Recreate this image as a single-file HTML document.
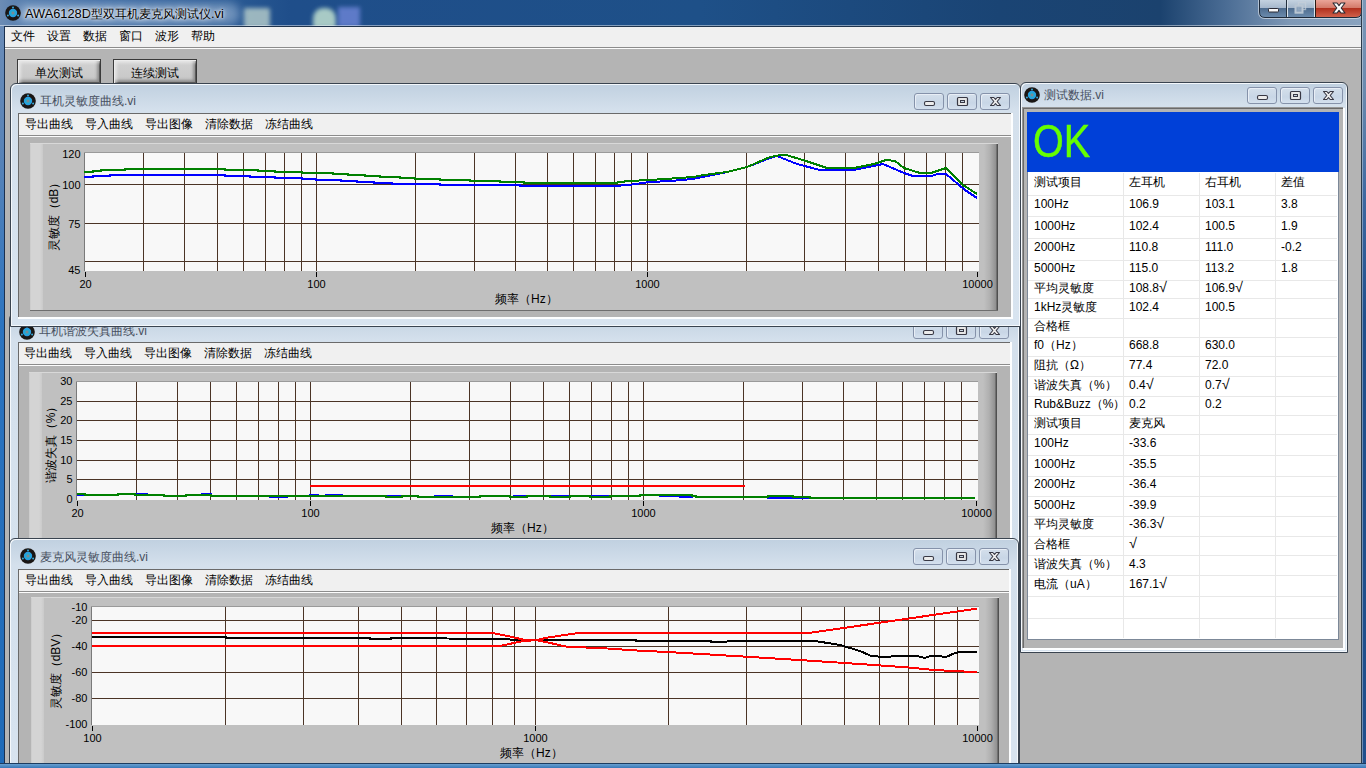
<!DOCTYPE html><html><head><meta charset="utf-8"><style>html,body{margin:0;padding:0;width:1366px;height:768px;overflow:hidden;font-family:"Liberation Sans", sans-serif;}</style></head><body style="background:#b4b4b4;position:relative">
<div style="position:absolute;left:0px;top:0px;width:1366px;height:26px;background:linear-gradient(90deg,#6c8cb4 0px,#4e78aa 30px,#3a68a0 120px,#2a5a94 230px,#1f4e8a 290px,#1e5088 700px,#1a4474 1000px,#1b426e 1160px,#4a6c94 1225px,#7e98b6 1290px,#8aa4c0 1366px)"></div>
<div style="position:absolute;left:244px;top:8px;width:26px;height:20px;background:#b0c8c8;filter:blur(2px);opacity:.85;border-radius:2px"></div>
<div style="position:absolute;left:313px;top:8px;width:23px;height:20px;background:#c0e0d0;filter:blur(2px);opacity:.85;border-radius:10px 10px 2px 2px"></div>
<div style="position:absolute;left:338px;top:7px;width:22px;height:20px;background:#6e86d8;filter:blur(2px);opacity:.8"></div>
<div style="position:absolute;left:0px;top:25px;width:1361px;height:1px;background:rgba(255,255,255,.45)"></div>
<div style="position:absolute;left:18px;top:3px;width:222px;height:22px;background:rgba(220,235,250,.38);filter:blur(5px);border-radius:10px"></div>
<svg style="position:absolute;left:4px;top:4px" width="18" height="18" viewBox="0 0 18 18"><circle cx="9" cy="9" r="7.8" fill="#1a1614"/><circle cx="9" cy="9" r="3.5" fill="#1ab0d8" stroke="#2a9ce0" stroke-width="1.4"/><rect x="7.6" y="7.6" width="2.8" height="2.8" fill="#7a8a96"/><circle cx="9" cy="3.4" r="1" fill="#3aa8d8"/><circle cx="3.9" cy="11.4" r="1" fill="#3aa8d8"/><circle cx="14.1" cy="11.4" r="1" fill="#3aa8d8"/></svg>
<div style="position:absolute;left:25px;top:8px;font-size:12px;line-height:1;color:#000;white-space:nowrap;text-shadow:0 0 7px rgba(255,255,255,.9),0 0 4px rgba(255,255,255,.9),0 0 2px rgba(255,255,255,.7)"><span style="font-size:12.8px">AWA6128D</span>型双耳机麦克风测试仪<span style="font-size:12.8px">.vi</span></div>
<svg style="position:absolute;left:1258px;top:0" width="105" height="19" viewBox="0 0 105 19"><defs><linearGradient id="gb" x1="0" y1="0" x2="0" y2="1"><stop offset="0" stop-color="#c4d2e0"/><stop offset="0.45" stop-color="#a6b8cc"/><stop offset="0.47" stop-color="#4e6c8e"/><stop offset="1" stop-color="#6c8cae"/></linearGradient><linearGradient id="gr" x1="0" y1="0" x2="0" y2="1"><stop offset="0" stop-color="#eaa498"/><stop offset="0.45" stop-color="#d47a6a"/><stop offset="0.47" stop-color="#b02e1c"/><stop offset="1" stop-color="#d0604a"/></linearGradient></defs><path d="M1.5 0 V12 Q1.5 17.5 7 17.5 H98 Q103.5 17.5 103.5 12 V0 Z" fill="url(#gb)"/><path d="M57.5 0 V17 H98 Q103 17 103 12 V0 Z" fill="url(#gr)"/><path d="M1.5 0 V12 Q1.5 17.5 7 17.5 H98 Q103.5 17.5 103.5 12 V0" fill="none" stroke="#1e2a3a" stroke-width="1"/><path d="M0.5 0 V12 Q0.5 18.5 7 18.5 H98 Q104.5 18.5 104.5 12 V0" fill="none" stroke="rgba(255,255,255,.5)" stroke-width="1"/><rect x="29" y="0" width="1" height="17" fill="#d8e2ec"/><rect x="28" y="0" width="1" height="17" fill="#22303e"/><rect x="56" y="0" width="1" height="17" fill="#d8e2ec"/><rect x="57" y="0" width="1" height="17" fill="#2a1a14"/><rect x="10.5" y="8.5" width="10" height="3.5" rx="0.8" fill="#f8f8f8" stroke="#2a2a34" stroke-width="1"/><rect x="40.5" y="2.5" width="7" height="7" fill="none" stroke="#c4ced8" stroke-width="1.4" opacity=".75"/><rect x="36.8" y="5" width="8.4" height="8.4" fill="#8ea4bc" opacity=".9"/><rect x="37.5" y="5.7" width="7" height="7" fill="none" stroke="#c4ced8" stroke-width="2" opacity=".8"/><path d="M75 3 L79 3 L81 5.6 L83 3 L87 3 L83.2 8 L87 13 L83 13 L81 10.4 L79 13 L75 13 L78.8 8 Z" fill="#fbfbfb" stroke="#2c2c34" stroke-width="1.1" stroke-linejoin="round"/></svg>
<div style="position:absolute;left:5px;top:26px;width:1356px;height:22px;background:#f0f0f0;border-top:1px solid #20344c;border-bottom:1px solid #8c8c8c;box-sizing:border-box"></div>
<div style="position:absolute;left:5px;top:48px;width:1356px;height:1px;background:#fcfcfc"></div>
<div style="position:absolute;left:11px;top:30px;font-size:12px;line-height:1;color:#000;white-space:nowrap;">文件</div>
<div style="position:absolute;left:47px;top:30px;font-size:12px;line-height:1;color:#000;white-space:nowrap;">设置</div>
<div style="position:absolute;left:83px;top:30px;font-size:12px;line-height:1;color:#000;white-space:nowrap;">数据</div>
<div style="position:absolute;left:119px;top:30px;font-size:12px;line-height:1;color:#000;white-space:nowrap;">窗口</div>
<div style="position:absolute;left:155px;top:30px;font-size:12px;line-height:1;color:#000;white-space:nowrap;">波形</div>
<div style="position:absolute;left:191px;top:30px;font-size:12px;line-height:1;color:#000;white-space:nowrap;">帮助</div>
<div style="position:absolute;left:17px;top:59px;width:82px;height:23px;border:1px solid #3a3a3a;background:linear-gradient(#d2d2d2,#c6c6c6);box-shadow:inset 1px 1px 0 #ececec,inset 3px 3px 3px rgba(255,255,255,.45),inset -1px -1px 0 #5a5a5a,inset -3px -3px 3px rgba(0,0,0,.3);font-size:12px;line-height:26px;text-align:center">单次测试</div>
<div style="position:absolute;left:113px;top:59px;width:82px;height:23px;border:1px solid #3a3a3a;background:linear-gradient(#d2d2d2,#c6c6c6);box-shadow:inset 1px 1px 0 #ececec,inset 3px 3px 3px rgba(255,255,255,.45),inset -1px -1px 0 #5a5a5a,inset -3px -3px 3px rgba(0,0,0,.3);font-size:12px;line-height:26px;text-align:center">连续测试</div>
<div style="position:absolute;left:9px;top:313px;width:1009px;height:486px;border:1px solid #3a4450;border-radius:6px 6px 0 0;background:linear-gradient(#c0d0e0 0px,#d4e0ec 26px,#d8e4f0 100%);box-shadow:inset 1px 1px 0 #f4f8fc,inset -1px -1px 0 #f4f8fc"></div>
<div style="position:absolute;left:18px;top:342px;width:994px;height:451px;background:#fdfeff"></div>
<div style="position:absolute;left:18px;top:342px;width:992px;height:449px;background:#b4b4b4;border-top:1px solid #6a6a6a;border-left:1px solid #6a6a6a;box-sizing:border-box"></div>
<svg style="position:absolute;left:18px;top:323px" width="18" height="18" viewBox="0 0 18 18"><circle cx="9" cy="9" r="7.8" fill="#1a1614"/><circle cx="9" cy="9" r="3.5" fill="#1ab0d8" stroke="#2a9ce0" stroke-width="1.4"/><rect x="7.6" y="7.6" width="2.8" height="2.8" fill="#7a8a96"/><circle cx="9" cy="3.4" r="1" fill="#3aa8d8"/><circle cx="3.9" cy="11.4" r="1" fill="#3aa8d8"/><circle cx="14.1" cy="11.4" r="1" fill="#3aa8d8"/></svg>
<div style="position:absolute;left:39px;top:325px;font-size:12px;line-height:1;color:#485060;white-space:nowrap;">耳机谐波失真曲线.vi</div>
<div style="position:absolute;left:913px;top:322px;width:28px;height:15px;border:1px solid #8592aa;border-radius:3px;background:linear-gradient(#d4dfeb,#c8d6e6 60%,#d4e0ee);box-shadow:inset 1px 1px 0 #e8eef6"></div>
<div style="position:absolute;left:946px;top:322px;width:28px;height:15px;border:1px solid #8592aa;border-radius:3px;background:linear-gradient(#d4dfeb,#c8d6e6 60%,#d4e0ee);box-shadow:inset 1px 1px 0 #e8eef6"></div>
<div style="position:absolute;left:979px;top:322px;width:28px;height:15px;border:1px solid #8592aa;border-radius:3px;background:linear-gradient(#d4dfeb,#c8d6e6 60%,#d4e0ee);box-shadow:inset 1px 1px 0 #e8eef6"></div>
<svg style="position:absolute;left:913px;top:322px" width="30" height="17"><rect x="10.5" y="8.5" width="10" height="4" rx="1.5" fill="#ececec" stroke="#383844" stroke-width="1.1"/></svg>
<svg style="position:absolute;left:946px;top:322px" width="30" height="17"><rect x="10.5" y="4.5" width="10" height="8" rx="1" fill="#e6e6e6" stroke="#383844" stroke-width="1.2"/><rect x="13.5" y="7.5" width="4" height="2" fill="#c6d2de" stroke="#383844" stroke-width="1"/></svg>
<svg style="position:absolute;left:979px;top:322px" width="30" height="17"><path d="M10.5 4.5 L13.8 4.5 L15.5 6.4 L17.2 4.5 L20.5 4.5 L17.2 8.5 L20.5 12.5 L17.2 12.5 L15.5 10.6 L13.8 12.5 L10.5 12.5 L13.8 8.5 Z" fill="#eeeeee" stroke="#383844" stroke-width="1.1" stroke-linejoin="round"/></svg>
<div style="position:absolute;left:19px;top:343px;width:991px;height:22px;background:#f0f0f0;border-bottom:1px solid #8c8c8c;box-sizing:border-box"></div>
<div style="position:absolute;left:19px;top:365px;width:991px;height:1px;background:#fcfcfc"></div>
<div style="position:absolute;left:24px;top:347px;font-size:12px;line-height:1;color:#000;white-space:nowrap;">导出曲线</div>
<div style="position:absolute;left:84px;top:347px;font-size:12px;line-height:1;color:#000;white-space:nowrap;">导入曲线</div>
<div style="position:absolute;left:144px;top:347px;font-size:12px;line-height:1;color:#000;white-space:nowrap;">导出图像</div>
<div style="position:absolute;left:204px;top:347px;font-size:12px;line-height:1;color:#000;white-space:nowrap;">清除数据</div>
<div style="position:absolute;left:264px;top:347px;font-size:12px;line-height:1;color:#000;white-space:nowrap;">冻结曲线</div>
<div style="position:absolute;left:29px;top:372px;width:968px;height:174px;background:linear-gradient(90deg,#c6c6c6 0px,#d4d4d4 1px,#d4d4d4 10px,#cacaca 13px,#c0c0c0 13px,#c0c0c0 calc(100% - 14px),#b0b0b0 calc(100% - 8px),#909090 calc(100% - 2px),#505050 calc(100% - 1px));box-shadow:inset 0 1px 0 #d8d8d8,inset 0 -1px 0 #6e6e6e"></div>
<svg style="position:absolute;left:76px;top:381px;overflow:visible" width="902" height="119" viewBox="0 0 902 119" shape-rendering="crispEdges"><rect x="0" y="0" width="902" height="119" fill="#f8f8f8"/><rect x="60" y="1" width="1" height="118" fill="#4b3426"/><rect x="101" y="1" width="1" height="118" fill="#4b3426"/><rect x="134" y="1" width="1" height="118" fill="#4b3426"/><rect x="160" y="1" width="1" height="118" fill="#4b3426"/><rect x="182" y="1" width="1" height="118" fill="#4b3426"/><rect x="202" y="1" width="1" height="118" fill="#4b3426"/><rect x="219" y="1" width="1" height="118" fill="#4b3426"/><rect x="234" y="1" width="1" height="118" fill="#4b3426"/><rect x="334" y="1" width="1" height="118" fill="#4b3426"/><rect x="393" y="1" width="1" height="118" fill="#4b3426"/><rect x="434" y="1" width="1" height="118" fill="#4b3426"/><rect x="467" y="1" width="1" height="118" fill="#4b3426"/><rect x="493" y="1" width="1" height="118" fill="#4b3426"/><rect x="515" y="1" width="1" height="118" fill="#4b3426"/><rect x="535" y="1" width="1" height="118" fill="#4b3426"/><rect x="552" y="1" width="1" height="118" fill="#4b3426"/><rect x="567" y="1" width="1" height="118" fill="#4b3426"/><rect x="667" y="1" width="1" height="118" fill="#4b3426"/><rect x="726" y="1" width="1" height="118" fill="#4b3426"/><rect x="767" y="1" width="1" height="118" fill="#4b3426"/><rect x="800" y="1" width="1" height="118" fill="#4b3426"/><rect x="826" y="1" width="1" height="118" fill="#4b3426"/><rect x="848" y="1" width="1" height="118" fill="#4b3426"/><rect x="868" y="1" width="1" height="118" fill="#4b3426"/><rect x="885" y="1" width="1" height="118" fill="#4b3426"/><rect x="1" y="20" width="901" height="1" fill="#4b3426"/><rect x="1" y="39" width="901" height="1" fill="#4b3426"/><rect x="1" y="59" width="901" height="1" fill="#4b3426"/><rect x="1" y="79" width="901" height="1" fill="#4b3426"/><rect x="1" y="98" width="901" height="1" fill="#4b3426"/><rect x="0" y="0" width="1" height="119" fill="#7a7a7a"/><rect x="0" y="0" width="902" height="1" fill="#9a9a9a"/><polyline points="1.0,114.0 9.0,114.0 9.0,114.0 42.0,114.0 42.0,113.0 59.0,113.0 59.0,113.0 71.0,113.0 71.0,114.0 88.0,114.0 88.0,115.0 110.0,115.0 110.0,114.0 126.0,114.0 126.0,113.0 135.0,113.0 135.0,115.0 194.0,115.0 194.0,116.0 211.0,116.0 211.0,115.0 234.0,115.0 234.0,114.0 242.0,114.0 242.0,115.0 250.0,115.0 250.0,114.0 266.0,114.0 266.0,115.0 310.0,115.0 310.0,115.0 326.0,115.0 326.0,115.0 342.0,115.0 342.0,116.0 359.0,116.0 359.0,115.0 376.0,115.0 376.0,116.0 404.0,116.0 404.0,115.0 434.0,115.0 434.0,116.0 438.0,116.0 438.0,115.0 451.0,115.0 451.0,115.0 474.0,115.0 474.0,115.0 494.0,115.0 494.0,115.0 514.0,115.0 514.0,115.0 534.0,115.0 534.0,115.0 564.0,115.0 564.0,114.0 584.0,114.0 584.0,115.0 604.0,115.0 604.0,116.0 616.0,116.0 616.0,115.0 620.0,115.0 620.0,116.0 692.0,116.0 692.0,117.0 717.0,117.0 717.0,117.0 734.0,117.0 734.0,117.0 899.0,117.0" fill="none" stroke="#0000ff" stroke-width="2" stroke-linejoin="round"/><polyline points="1.0,113.0 9.0,113.0 9.0,114.0 42.0,114.0 42.0,113.0 59.0,113.0 59.0,114.0 88.0,114.0 88.0,115.0 110.0,115.0 110.0,114.0 135.0,114.0 135.0,115.0 310.0,115.0 310.0,116.0 326.0,116.0 326.0,115.0 342.0,115.0 342.0,116.0 404.0,116.0 404.0,115.0 434.0,115.0 434.0,116.0 451.0,116.0 451.0,115.0 474.0,115.0 474.0,116.0 494.0,116.0 494.0,115.0 514.0,115.0 514.0,116.0 534.0,116.0 534.0,115.0 564.0,115.0 564.0,114.0 616.0,114.0 616.0,115.0 620.0,115.0 620.0,116.0 692.0,116.0 692.0,115.0 717.0,115.0 717.0,116.0 734.0,116.0 734.0,117.0 899.0,117.0" fill="none" stroke="#008000" stroke-width="2" stroke-linejoin="round"/><polyline points="234.0,105.0 669.0,105.0" fill="none" stroke="#ff0000" stroke-width="2" stroke-linejoin="round"/></svg>
<div style="position:absolute;left:12.5px;top:374.15px;width:60px;text-align:right;font-size:11px;line-height:14px;color:#000">30</div>
<div style="position:absolute;left:12.5px;top:394.15px;width:60px;text-align:right;font-size:11px;line-height:14px;color:#000">25</div>
<div style="position:absolute;left:12.5px;top:413.15px;width:60px;text-align:right;font-size:11px;line-height:14px;color:#000">20</div>
<div style="position:absolute;left:12.5px;top:433.15px;width:60px;text-align:right;font-size:11px;line-height:14px;color:#000">15</div>
<div style="position:absolute;left:12.5px;top:453.15px;width:60px;text-align:right;font-size:11px;line-height:14px;color:#000">10</div>
<div style="position:absolute;left:12.5px;top:472.15px;width:60px;text-align:right;font-size:11px;line-height:14px;color:#000">5</div>
<div style="position:absolute;left:12.5px;top:492.15px;width:60px;text-align:right;font-size:11px;line-height:14px;color:#000">0</div>
<div style="position:absolute;left:37.5px;top:506px;width:80px;text-align:center;font-size:11px;line-height:14px;color:#000">20</div>
<div style="position:absolute;left:77px;top:501px;width:1px;height:5px;background:#000"></div>
<div style="position:absolute;left:270.5px;top:506px;width:80px;text-align:center;font-size:11px;line-height:14px;color:#000">100</div>
<div style="position:absolute;left:310px;top:501px;width:1px;height:5px;background:#000"></div>
<div style="position:absolute;left:603.5px;top:506px;width:80px;text-align:center;font-size:11px;line-height:14px;color:#000">1000</div>
<div style="position:absolute;left:643px;top:501px;width:1px;height:5px;background:#000"></div>
<div style="position:absolute;left:936.5px;top:506px;width:80px;text-align:center;font-size:11px;line-height:14px;color:#000">10000</div>
<div style="position:absolute;left:976px;top:501px;width:1px;height:5px;background:#000"></div>
<div style="position:absolute;left:-9.5px;top:433.5px;width:120px;height:16px;text-align:center;font-size:12px;line-height:16px;transform:rotate(-90deg)">谐波失真（%）</div>
<div style="position:absolute;left:491px;top:522px;font-size:12px;line-height:1;color:#000;white-space:nowrap;">频率（Hz）</div>
<div style="position:absolute;left:10px;top:83px;width:1009px;height:242px;border:1px solid #3a4450;border-radius:6px 6px 0 0;background:linear-gradient(#c0d0e0 0px,#d4e0ec 26px,#d8e4f0 100%);box-shadow:inset 1px 1px 0 #f4f8fc,inset -1px -1px 0 #f4f8fc"></div>
<div style="position:absolute;left:18px;top:113px;width:995px;height:206px;background:#fdfeff"></div>
<div style="position:absolute;left:18px;top:113px;width:993px;height:204px;background:#b4b4b4;border-top:1px solid #6a6a6a;border-left:1px solid #6a6a6a;box-sizing:border-box"></div>
<svg style="position:absolute;left:19px;top:92px" width="18" height="18" viewBox="0 0 18 18"><circle cx="9" cy="9" r="7.8" fill="#1a1614"/><circle cx="9" cy="9" r="3.5" fill="#1ab0d8" stroke="#2a9ce0" stroke-width="1.4"/><rect x="7.6" y="7.6" width="2.8" height="2.8" fill="#7a8a96"/><circle cx="9" cy="3.4" r="1" fill="#3aa8d8"/><circle cx="3.9" cy="11.4" r="1" fill="#3aa8d8"/><circle cx="14.1" cy="11.4" r="1" fill="#3aa8d8"/></svg>
<div style="position:absolute;left:40px;top:95px;font-size:12px;line-height:1;color:#485060;white-space:nowrap;">耳机灵敏度曲线.vi</div>
<div style="position:absolute;left:914px;top:93px;width:28px;height:15px;border:1px solid #8592aa;border-radius:3px;background:linear-gradient(#d4dfeb,#c8d6e6 60%,#d4e0ee);box-shadow:inset 1px 1px 0 #e8eef6"></div>
<div style="position:absolute;left:947px;top:93px;width:28px;height:15px;border:1px solid #8592aa;border-radius:3px;background:linear-gradient(#d4dfeb,#c8d6e6 60%,#d4e0ee);box-shadow:inset 1px 1px 0 #e8eef6"></div>
<div style="position:absolute;left:980px;top:93px;width:28px;height:15px;border:1px solid #8592aa;border-radius:3px;background:linear-gradient(#d4dfeb,#c8d6e6 60%,#d4e0ee);box-shadow:inset 1px 1px 0 #e8eef6"></div>
<svg style="position:absolute;left:914px;top:93px" width="30" height="17"><rect x="10.5" y="8.5" width="10" height="4" rx="1.5" fill="#ececec" stroke="#383844" stroke-width="1.1"/></svg>
<svg style="position:absolute;left:947px;top:93px" width="30" height="17"><rect x="10.5" y="4.5" width="10" height="8" rx="1" fill="#e6e6e6" stroke="#383844" stroke-width="1.2"/><rect x="13.5" y="7.5" width="4" height="2" fill="#c6d2de" stroke="#383844" stroke-width="1"/></svg>
<svg style="position:absolute;left:980px;top:93px" width="30" height="17"><path d="M10.5 4.5 L13.8 4.5 L15.5 6.4 L17.2 4.5 L20.5 4.5 L17.2 8.5 L20.5 12.5 L17.2 12.5 L15.5 10.6 L13.8 12.5 L10.5 12.5 L13.8 8.5 Z" fill="#eeeeee" stroke="#383844" stroke-width="1.1" stroke-linejoin="round"/></svg>
<div style="position:absolute;left:19px;top:114px;width:992px;height:22px;background:#f0f0f0;border-bottom:1px solid #8c8c8c;box-sizing:border-box"></div>
<div style="position:absolute;left:19px;top:136px;width:992px;height:1px;background:#fcfcfc"></div>
<div style="position:absolute;left:25px;top:118px;font-size:12px;line-height:1;color:#000;white-space:nowrap;">导出曲线</div>
<div style="position:absolute;left:85px;top:118px;font-size:12px;line-height:1;color:#000;white-space:nowrap;">导入曲线</div>
<div style="position:absolute;left:145px;top:118px;font-size:12px;line-height:1;color:#000;white-space:nowrap;">导出图像</div>
<div style="position:absolute;left:205px;top:118px;font-size:12px;line-height:1;color:#000;white-space:nowrap;">清除数据</div>
<div style="position:absolute;left:265px;top:118px;font-size:12px;line-height:1;color:#000;white-space:nowrap;">冻结曲线</div>
<div style="position:absolute;left:30px;top:143px;width:968px;height:168px;background:linear-gradient(90deg,#c6c6c6 0px,#d4d4d4 1px,#d4d4d4 10px,#cacaca 13px,#c0c0c0 13px,#c0c0c0 calc(100% - 14px),#b0b0b0 calc(100% - 8px),#909090 calc(100% - 2px),#505050 calc(100% - 1px));box-shadow:inset 0 1px 0 #d8d8d8,inset 0 -1px 0 #6e6e6e"></div>
<svg style="position:absolute;left:84px;top:152px;overflow:visible" width="895" height="119" viewBox="0 0 895 119" shape-rendering="crispEdges"><rect x="0" y="0" width="895" height="119" fill="#f8f8f8"/><rect x="59" y="1" width="1" height="118" fill="#4b3426"/><rect x="100" y="1" width="1" height="118" fill="#4b3426"/><rect x="133" y="1" width="1" height="118" fill="#4b3426"/><rect x="159" y="1" width="1" height="118" fill="#4b3426"/><rect x="181" y="1" width="1" height="118" fill="#4b3426"/><rect x="200" y="1" width="1" height="118" fill="#4b3426"/><rect x="217" y="1" width="1" height="118" fill="#4b3426"/><rect x="232" y="1" width="1" height="118" fill="#4b3426"/><rect x="331" y="1" width="1" height="118" fill="#4b3426"/><rect x="390" y="1" width="1" height="118" fill="#4b3426"/><rect x="431" y="1" width="1" height="118" fill="#4b3426"/><rect x="463" y="1" width="1" height="118" fill="#4b3426"/><rect x="489" y="1" width="1" height="118" fill="#4b3426"/><rect x="511" y="1" width="1" height="118" fill="#4b3426"/><rect x="530" y="1" width="1" height="118" fill="#4b3426"/><rect x="547" y="1" width="1" height="118" fill="#4b3426"/><rect x="563" y="1" width="1" height="118" fill="#4b3426"/><rect x="662" y="1" width="1" height="118" fill="#4b3426"/><rect x="720" y="1" width="1" height="118" fill="#4b3426"/><rect x="761" y="1" width="1" height="118" fill="#4b3426"/><rect x="794" y="1" width="1" height="118" fill="#4b3426"/><rect x="820" y="1" width="1" height="118" fill="#4b3426"/><rect x="842" y="1" width="1" height="118" fill="#4b3426"/><rect x="861" y="1" width="1" height="118" fill="#4b3426"/><rect x="878" y="1" width="1" height="118" fill="#4b3426"/><rect x="1" y="32" width="894" height="1" fill="#4b3426"/><rect x="1" y="71" width="894" height="1" fill="#4b3426"/><rect x="1" y="109" width="894" height="1" fill="#4b3426"/><rect x="0" y="0" width="1" height="119" fill="#7a7a7a"/><rect x="0" y="0" width="895" height="1" fill="#9a9a9a"/><polyline points="0.0,25.0 9.0,25.0 9.0,24.0 26.0,24.0 26.0,23.0 141.0,23.0 141.0,24.0 166.0,24.0 166.0,25.0 191.0,25.0 191.0,26.0 218.0,26.0 218.0,27.0 232.0,27.0 232.0,28.0 257.0,28.0 257.0,29.0 273.0,29.0 273.0,30.0 290.0,30.0 290.0,31.0 308.0,31.0 308.0,32.0 336.0,32.0 336.0,32.0 356.0,32.0 356.0,33.0 406.0,33.0 406.0,33.0 436.0,33.0 436.0,34.0 530.0,34.0 544.0,33.0 566.0,30.0 586.0,29.0 609.0,27.0 643.0,20.0 663.0,15.0 686.0,6.0 693.0,4.0 713.0,12.0 736.0,18.0 770.0,18.0 799.0,12.0 820.0,21.0 829.0,24.0 847.0,24.0 854.0,22.0 862.0,22.0 881.0,38.0 893.0,46.0" fill="none" stroke="#0000ff" stroke-width="2" stroke-linejoin="round"/><polyline points="0.0,20.0 9.0,20.0 9.0,19.0 17.0,19.0 17.0,18.0 41.0,18.0 41.0,17.0 141.0,17.0 141.0,18.0 174.0,18.0 174.0,19.0 191.0,19.0 191.0,20.0 218.0,20.0 218.0,21.0 249.0,21.0 249.0,22.0 264.0,22.0 264.0,23.0 281.0,23.0 281.0,24.0 296.0,24.0 296.0,25.0 316.0,25.0 316.0,26.0 331.0,26.0 331.0,27.0 356.0,27.0 356.0,28.0 386.0,28.0 386.0,29.0 416.0,29.0 416.0,30.0 440.0,30.0 440.0,31.0 530.0,31.0 544.0,29.0 566.0,28.0 596.0,26.0 609.0,25.0 620.0,23.0 643.0,20.0 663.0,15.0 686.0,5.0 697.0,3.0 704.0,3.5 722.0,9.0 743.0,16.0 770.0,16.0 790.0,12.0 802.0,8.0 811.0,9.0 820.0,16.0 836.0,21.0 847.0,21.0 862.0,16.0 879.0,33.0 893.0,42.0" fill="none" stroke="#008000" stroke-width="2" stroke-linejoin="round"/></svg>
<div style="position:absolute;left:20.5px;top:147.15px;width:60px;text-align:right;font-size:11px;line-height:14px;color:#000">120</div>
<div style="position:absolute;left:20.5px;top:178.15px;width:60px;text-align:right;font-size:11px;line-height:14px;color:#000">100</div>
<div style="position:absolute;left:20.5px;top:217.15px;width:60px;text-align:right;font-size:11px;line-height:14px;color:#000">75</div>
<div style="position:absolute;left:20.5px;top:263.15px;width:60px;text-align:right;font-size:11px;line-height:14px;color:#000">45</div>
<div style="position:absolute;left:45.5px;top:277px;width:80px;text-align:center;font-size:11px;line-height:14px;color:#000">20</div>
<div style="position:absolute;left:85px;top:272px;width:1px;height:5px;background:#000"></div>
<div style="position:absolute;left:276.5px;top:277px;width:80px;text-align:center;font-size:11px;line-height:14px;color:#000">100</div>
<div style="position:absolute;left:316px;top:272px;width:1px;height:5px;background:#000"></div>
<div style="position:absolute;left:607.5px;top:277px;width:80px;text-align:center;font-size:11px;line-height:14px;color:#000">1000</div>
<div style="position:absolute;left:647px;top:272px;width:1px;height:5px;background:#000"></div>
<div style="position:absolute;left:937.5px;top:277px;width:80px;text-align:center;font-size:11px;line-height:14px;color:#000">10000</div>
<div style="position:absolute;left:977px;top:272px;width:1px;height:5px;background:#000"></div>
<div style="position:absolute;left:-6.5px;top:206px;width:120px;height:16px;text-align:center;font-size:12px;line-height:16px;transform:rotate(-90deg)">灵敏度（dB）</div>
<div style="position:absolute;left:495px;top:293px;font-size:12px;line-height:1;color:#000;white-space:nowrap;">频率（Hz）</div>
<div style="position:absolute;left:9px;top:538px;width:1008px;height:261px;border:1px solid #3a4450;border-radius:6px 6px 0 0;background:linear-gradient(#c0d0e0 0px,#d4e0ec 26px,#d8e4f0 100%);box-shadow:inset 1px 1px 0 #f4f8fc,inset -1px -1px 0 #f4f8fc"></div>
<div style="position:absolute;left:18px;top:569px;width:993px;height:224px;background:#fdfeff"></div>
<div style="position:absolute;left:18px;top:569px;width:991px;height:222px;background:#b4b4b4;border-top:1px solid #6a6a6a;border-left:1px solid #6a6a6a;box-sizing:border-box"></div>
<svg style="position:absolute;left:19px;top:547px" width="18" height="18" viewBox="0 0 18 18"><circle cx="9" cy="9" r="7.8" fill="#1a1614"/><circle cx="9" cy="9" r="3.5" fill="#1ab0d8" stroke="#2a9ce0" stroke-width="1.4"/><rect x="7.6" y="7.6" width="2.8" height="2.8" fill="#7a8a96"/><circle cx="9" cy="3.4" r="1" fill="#3aa8d8"/><circle cx="3.9" cy="11.4" r="1" fill="#3aa8d8"/><circle cx="14.1" cy="11.4" r="1" fill="#3aa8d8"/></svg>
<div style="position:absolute;left:40px;top:551px;font-size:12px;line-height:1;color:#485060;white-space:nowrap;">麦克风灵敏度曲线.vi</div>
<div style="position:absolute;left:913px;top:548px;width:28px;height:15px;border:1px solid #8592aa;border-radius:3px;background:linear-gradient(#d4dfeb,#c8d6e6 60%,#d4e0ee);box-shadow:inset 1px 1px 0 #e8eef6"></div>
<div style="position:absolute;left:946px;top:548px;width:28px;height:15px;border:1px solid #8592aa;border-radius:3px;background:linear-gradient(#d4dfeb,#c8d6e6 60%,#d4e0ee);box-shadow:inset 1px 1px 0 #e8eef6"></div>
<div style="position:absolute;left:979px;top:548px;width:28px;height:15px;border:1px solid #8592aa;border-radius:3px;background:linear-gradient(#d4dfeb,#c8d6e6 60%,#d4e0ee);box-shadow:inset 1px 1px 0 #e8eef6"></div>
<svg style="position:absolute;left:913px;top:548px" width="30" height="17"><rect x="10.5" y="8.5" width="10" height="4" rx="1.5" fill="#ececec" stroke="#383844" stroke-width="1.1"/></svg>
<svg style="position:absolute;left:946px;top:548px" width="30" height="17"><rect x="10.5" y="4.5" width="10" height="8" rx="1" fill="#e6e6e6" stroke="#383844" stroke-width="1.2"/><rect x="13.5" y="7.5" width="4" height="2" fill="#c6d2de" stroke="#383844" stroke-width="1"/></svg>
<svg style="position:absolute;left:979px;top:548px" width="30" height="17"><path d="M10.5 4.5 L13.8 4.5 L15.5 6.4 L17.2 4.5 L20.5 4.5 L17.2 8.5 L20.5 12.5 L17.2 12.5 L15.5 10.6 L13.8 12.5 L10.5 12.5 L13.8 8.5 Z" fill="#eeeeee" stroke="#383844" stroke-width="1.1" stroke-linejoin="round"/></svg>
<div style="position:absolute;left:19px;top:570px;width:990px;height:22px;background:#f0f0f0;border-bottom:1px solid #8c8c8c;box-sizing:border-box"></div>
<div style="position:absolute;left:19px;top:592px;width:990px;height:1px;background:#fcfcfc"></div>
<div style="position:absolute;left:25px;top:574px;font-size:12px;line-height:1;color:#000;white-space:nowrap;">导出曲线</div>
<div style="position:absolute;left:85px;top:574px;font-size:12px;line-height:1;color:#000;white-space:nowrap;">导入曲线</div>
<div style="position:absolute;left:145px;top:574px;font-size:12px;line-height:1;color:#000;white-space:nowrap;">导出图像</div>
<div style="position:absolute;left:205px;top:574px;font-size:12px;line-height:1;color:#000;white-space:nowrap;">清除数据</div>
<div style="position:absolute;left:265px;top:574px;font-size:12px;line-height:1;color:#000;white-space:nowrap;">冻结曲线</div>
<div style="position:absolute;left:31px;top:597px;width:968px;height:184px;background:linear-gradient(90deg,#c6c6c6 0px,#d4d4d4 1px,#d4d4d4 10px,#cacaca 13px,#c0c0c0 13px,#c0c0c0 calc(100% - 14px),#b0b0b0 calc(100% - 8px),#909090 calc(100% - 2px),#505050 calc(100% - 1px));box-shadow:inset 0 1px 0 #d8d8d8,inset 0 -1px 0 #6e6e6e"></div>
<svg style="position:absolute;left:91px;top:606px;overflow:visible" width="888" height="119" viewBox="0 0 888 119" shape-rendering="crispEdges"><rect x="0" y="0" width="888" height="119" fill="#f8f8f8"/><rect x="134" y="1" width="1" height="118" fill="#4b3426"/><rect x="212" y="1" width="1" height="118" fill="#4b3426"/><rect x="267" y="1" width="1" height="118" fill="#4b3426"/><rect x="310" y="1" width="1" height="118" fill="#4b3426"/><rect x="345" y="1" width="1" height="118" fill="#4b3426"/><rect x="375" y="1" width="1" height="118" fill="#4b3426"/><rect x="401" y="1" width="1" height="118" fill="#4b3426"/><rect x="423" y="1" width="1" height="118" fill="#4b3426"/><rect x="444" y="1" width="1" height="118" fill="#4b3426"/><rect x="577" y="1" width="1" height="118" fill="#4b3426"/><rect x="655" y="1" width="1" height="118" fill="#4b3426"/><rect x="710" y="1" width="1" height="118" fill="#4b3426"/><rect x="753" y="1" width="1" height="118" fill="#4b3426"/><rect x="788" y="1" width="1" height="118" fill="#4b3426"/><rect x="817" y="1" width="1" height="118" fill="#4b3426"/><rect x="843" y="1" width="1" height="118" fill="#4b3426"/><rect x="866" y="1" width="1" height="118" fill="#4b3426"/><rect x="1" y="14" width="887" height="1" fill="#4b3426"/><rect x="1" y="40" width="887" height="1" fill="#4b3426"/><rect x="1" y="66" width="887" height="1" fill="#4b3426"/><rect x="1" y="92" width="887" height="1" fill="#4b3426"/><rect x="0" y="0" width="1" height="119" fill="#7a7a7a"/><rect x="0" y="0" width="888" height="1" fill="#9a9a9a"/><polyline points="1.0,30.8 135.0,30.8 135.0,32.0 279.0,32.0 279.0,33.0 300.0,33.0 300.0,32.0 412.0,33.0 433.0,34.5 469.0,34.0 545.0,34.0 545.0,35.0 620.0,35.0 620.0,35.8 663.0,35.0 711.0,35.0 724.0,35.0 749.0,39.0 769.0,45.0 779.0,49.5 789.0,50.7 799.0,50.7 804.0,49.5 824.0,49.5 834.0,52.0 839.0,50.0 849.0,50.0 854.0,51.5 864.0,47.0 869.0,46.0 886.0,46.0" fill="none" stroke="#000000" stroke-width="2" stroke-linejoin="round"/><polyline points="1.0,27.0 401.0,27.0 412.0,29.0 432.0,33.5 445.0,34.2 457.0,36.5 476.0,40.8 509.0,42.0 546.0,44.5 589.0,46.7 655.0,50.7 710.0,54.1 754.0,57.0 817.0,61.4 843.0,64.0 886.0,66.2" fill="none" stroke="#ff0000" stroke-width="2" stroke-linejoin="round"/><polyline points="1.0,40.0 409.0,40.0 432.0,35.0 445.0,34.2 457.0,31.5 487.0,27.0 718.0,27.0 886.0,2.6" fill="none" stroke="#ff0000" stroke-width="2" stroke-linejoin="round"/></svg>
<div style="position:absolute;left:27.5px;top:600.15px;width:60px;text-align:right;font-size:11px;line-height:14px;color:#000">-10</div>
<div style="position:absolute;left:27.5px;top:613.15px;width:60px;text-align:right;font-size:11px;line-height:14px;color:#000">-20</div>
<div style="position:absolute;left:27.5px;top:639.15px;width:60px;text-align:right;font-size:11px;line-height:14px;color:#000">-40</div>
<div style="position:absolute;left:27.5px;top:665.15px;width:60px;text-align:right;font-size:11px;line-height:14px;color:#000">-60</div>
<div style="position:absolute;left:27.5px;top:691.15px;width:60px;text-align:right;font-size:11px;line-height:14px;color:#000">-80</div>
<div style="position:absolute;left:27.5px;top:717.15px;width:60px;text-align:right;font-size:11px;line-height:14px;color:#000">-100</div>
<div style="position:absolute;left:52.5px;top:731px;width:80px;text-align:center;font-size:11px;line-height:14px;color:#000">100</div>
<div style="position:absolute;left:92px;top:726px;width:1px;height:5px;background:#000"></div>
<div style="position:absolute;left:495.5px;top:731px;width:80px;text-align:center;font-size:11px;line-height:14px;color:#000">1000</div>
<div style="position:absolute;left:535px;top:726px;width:1px;height:5px;background:#000"></div>
<div style="position:absolute;left:937.5px;top:731px;width:80px;text-align:center;font-size:11px;line-height:14px;color:#000">10000</div>
<div style="position:absolute;left:977px;top:726px;width:1px;height:5px;background:#000"></div>
<div style="position:absolute;left:-4px;top:660px;width:120px;height:16px;text-align:center;font-size:12px;line-height:16px;transform:rotate(-90deg)">灵敏度（dBV）</div>
<div style="position:absolute;left:500px;top:747px;font-size:12px;line-height:1;color:#000;white-space:nowrap;">频率（Hz）</div>
<div style="position:absolute;left:1020px;top:82px;width:326px;height:569px;border:1px solid #3a4450;border-radius:6px 6px 0 0;background:linear-gradient(#c0d0e0 0px,#d4e0ec 22px,#d8e4f0 100%);box-shadow:inset 1px 1px 0 #f4f8fc,inset -1px -1px 0 #f4f8fc"></div>
<div style="position:absolute;left:1023px;top:108px;width:322px;height:542px;background:#fdfeff"></div>
<div style="position:absolute;left:1023px;top:108px;width:320px;height:540px;background:#b4b4b4;border-top:1px solid #6a6a6a;border-left:1px solid #6a6a6a;box-sizing:border-box"></div>
<svg style="position:absolute;left:1023px;top:86px" width="18" height="18" viewBox="0 0 18 18"><circle cx="9" cy="9" r="7.8" fill="#1a1614"/><circle cx="9" cy="9" r="3.5" fill="#1ab0d8" stroke="#2a9ce0" stroke-width="1.4"/><rect x="7.6" y="7.6" width="2.8" height="2.8" fill="#7a8a96"/><circle cx="9" cy="3.4" r="1" fill="#3aa8d8"/><circle cx="3.9" cy="11.4" r="1" fill="#3aa8d8"/><circle cx="14.1" cy="11.4" r="1" fill="#3aa8d8"/></svg>
<div style="position:absolute;left:1044px;top:89px;font-size:12px;line-height:1;color:#485060;white-space:nowrap;">测试数据.vi</div>
<div style="position:absolute;left:1247px;top:87px;width:28px;height:15px;border:1px solid #8592aa;border-radius:3px;background:linear-gradient(#d4dfeb,#c8d6e6 60%,#d4e0ee);box-shadow:inset 1px 1px 0 #e8eef6"></div>
<div style="position:absolute;left:1280px;top:87px;width:28px;height:15px;border:1px solid #8592aa;border-radius:3px;background:linear-gradient(#d4dfeb,#c8d6e6 60%,#d4e0ee);box-shadow:inset 1px 1px 0 #e8eef6"></div>
<div style="position:absolute;left:1313px;top:87px;width:28px;height:15px;border:1px solid #8592aa;border-radius:3px;background:linear-gradient(#d4dfeb,#c8d6e6 60%,#d4e0ee);box-shadow:inset 1px 1px 0 #e8eef6"></div>
<svg style="position:absolute;left:1247px;top:87px" width="30" height="17"><rect x="10.5" y="8.5" width="10" height="4" rx="1.5" fill="#ececec" stroke="#383844" stroke-width="1.1"/></svg>
<svg style="position:absolute;left:1280px;top:87px" width="30" height="17"><rect x="10.5" y="4.5" width="10" height="8" rx="1" fill="#e6e6e6" stroke="#383844" stroke-width="1.2"/><rect x="13.5" y="7.5" width="4" height="2" fill="#c6d2de" stroke="#383844" stroke-width="1"/></svg>
<svg style="position:absolute;left:1313px;top:87px" width="30" height="17"><path d="M10.5 4.5 L13.8 4.5 L15.5 6.4 L17.2 4.5 L20.5 4.5 L17.2 8.5 L20.5 12.5 L17.2 12.5 L15.5 10.6 L13.8 12.5 L10.5 12.5 L13.8 8.5 Z" fill="#eeeeee" stroke="#383844" stroke-width="1.1" stroke-linejoin="round"/></svg>
<div style="position:absolute;left:1022px;top:107px;width:321px;height:1px;background:#969696"></div>
<div style="position:absolute;left:1022px;top:107px;width:1px;height:541px;background:#969696"></div>
<div style="position:absolute;left:1027px;top:112px;width:312px;height:60px;background:#0040d8"></div>
<div style="position:absolute;left:1033px;top:118px;font-size:46px;line-height:1;color:#66ff00;white-space:nowrap;transform:scaleX(0.86);transform-origin:0 0;-webkit-text-stroke:0.5px #66ff00">OK</div>
<div style="position:absolute;left:1027px;top:172px;width:312px;height:468px;background:#fff;border:1px solid #7c8898;border-top:none;box-sizing:border-box"></div>
<div style="position:absolute;left:1028px;top:195px;width:309px;height:1px;background:#e8e8e8"></div>
<div style="position:absolute;left:1028px;top:216px;width:309px;height:1px;background:#e8e8e8"></div>
<div style="position:absolute;left:1028px;top:238px;width:309px;height:1px;background:#e8e8e8"></div>
<div style="position:absolute;left:1028px;top:260px;width:309px;height:1px;background:#e8e8e8"></div>
<div style="position:absolute;left:1028px;top:280px;width:309px;height:1px;background:#e8e8e8"></div>
<div style="position:absolute;left:1028px;top:298px;width:309px;height:1px;background:#e8e8e8"></div>
<div style="position:absolute;left:1028px;top:318px;width:309px;height:1px;background:#e8e8e8"></div>
<div style="position:absolute;left:1028px;top:337px;width:309px;height:1px;background:#e8e8e8"></div>
<div style="position:absolute;left:1028px;top:356px;width:309px;height:1px;background:#e8e8e8"></div>
<div style="position:absolute;left:1028px;top:376px;width:309px;height:1px;background:#e8e8e8"></div>
<div style="position:absolute;left:1028px;top:396px;width:309px;height:1px;background:#e8e8e8"></div>
<div style="position:absolute;left:1028px;top:415px;width:309px;height:1px;background:#e8e8e8"></div>
<div style="position:absolute;left:1028px;top:434px;width:309px;height:1px;background:#e8e8e8"></div>
<div style="position:absolute;left:1028px;top:455px;width:309px;height:1px;background:#e8e8e8"></div>
<div style="position:absolute;left:1028px;top:476px;width:309px;height:1px;background:#e8e8e8"></div>
<div style="position:absolute;left:1028px;top:496px;width:309px;height:1px;background:#e8e8e8"></div>
<div style="position:absolute;left:1028px;top:516px;width:309px;height:1px;background:#e8e8e8"></div>
<div style="position:absolute;left:1028px;top:536px;width:309px;height:1px;background:#e8e8e8"></div>
<div style="position:absolute;left:1028px;top:555px;width:309px;height:1px;background:#e8e8e8"></div>
<div style="position:absolute;left:1028px;top:575px;width:309px;height:1px;background:#e8e8e8"></div>
<div style="position:absolute;left:1028px;top:596px;width:309px;height:1px;background:#e8e8e8"></div>
<div style="position:absolute;left:1028px;top:618px;width:309px;height:1px;background:#e8e8e8"></div>
<div style="position:absolute;left:1123px;top:173px;width:1px;height:465px;background:#e8e8e8"></div>
<div style="position:absolute;left:1199px;top:173px;width:1px;height:465px;background:#e8e8e8"></div>
<div style="position:absolute;left:1275px;top:173px;width:1px;height:465px;background:#e8e8e8"></div>
<div style="position:absolute;left:1034px;top:175.0px;font-size:12px;line-height:14px;white-space:nowrap">测试项目</div>
<div style="position:absolute;left:1129px;top:175.0px;font-size:12px;line-height:14px;white-space:nowrap">左耳机</div>
<div style="position:absolute;left:1205px;top:175.0px;font-size:12px;line-height:14px;white-space:nowrap">右耳机</div>
<div style="position:absolute;left:1281px;top:175.0px;font-size:12px;line-height:14px;white-space:nowrap">差值</div>
<div style="position:absolute;left:1034px;top:197.2px;font-size:12px;line-height:14px;white-space:nowrap">100Hz</div>
<div style="position:absolute;left:1129px;top:197.2px;font-size:12px;line-height:14px;white-space:nowrap">106.9</div>
<div style="position:absolute;left:1205px;top:197.2px;font-size:12px;line-height:14px;white-space:nowrap">103.1</div>
<div style="position:absolute;left:1281px;top:197.2px;font-size:12px;line-height:14px;white-space:nowrap">3.8</div>
<div style="position:absolute;left:1034px;top:218.8px;font-size:12px;line-height:14px;white-space:nowrap">1000Hz</div>
<div style="position:absolute;left:1129px;top:218.8px;font-size:12px;line-height:14px;white-space:nowrap">102.4</div>
<div style="position:absolute;left:1205px;top:218.8px;font-size:12px;line-height:14px;white-space:nowrap">100.5</div>
<div style="position:absolute;left:1281px;top:218.8px;font-size:12px;line-height:14px;white-space:nowrap">1.9</div>
<div style="position:absolute;left:1034px;top:240.2px;font-size:12px;line-height:14px;white-space:nowrap">2000Hz</div>
<div style="position:absolute;left:1129px;top:240.2px;font-size:12px;line-height:14px;white-space:nowrap">110.8</div>
<div style="position:absolute;left:1205px;top:240.2px;font-size:12px;line-height:14px;white-space:nowrap">111.0</div>
<div style="position:absolute;left:1281px;top:240.2px;font-size:12px;line-height:14px;white-space:nowrap">-0.2</div>
<div style="position:absolute;left:1034px;top:261.2px;font-size:12px;line-height:14px;white-space:nowrap">5000Hz</div>
<div style="position:absolute;left:1129px;top:261.2px;font-size:12px;line-height:14px;white-space:nowrap">115.0</div>
<div style="position:absolute;left:1205px;top:261.2px;font-size:12px;line-height:14px;white-space:nowrap">113.2</div>
<div style="position:absolute;left:1281px;top:261.2px;font-size:12px;line-height:14px;white-space:nowrap">1.8</div>
<div style="position:absolute;left:1034px;top:280.8px;font-size:12px;line-height:14px;white-space:nowrap">平均灵敏度</div>
<div style="position:absolute;left:1129px;top:280.8px;font-size:12px;line-height:14px;white-space:nowrap">108.8<span style="font-size:14.5px;line-height:10px">√</span></div>
<div style="position:absolute;left:1205px;top:280.8px;font-size:12px;line-height:14px;white-space:nowrap">106.9<span style="font-size:14.5px;line-height:10px">√</span></div>
<div style="position:absolute;left:1034px;top:299.5px;font-size:12px;line-height:14px;white-space:nowrap">1kHz灵敏度</div>
<div style="position:absolute;left:1129px;top:299.5px;font-size:12px;line-height:14px;white-space:nowrap">102.4</div>
<div style="position:absolute;left:1205px;top:299.5px;font-size:12px;line-height:14px;white-space:nowrap">100.5</div>
<div style="position:absolute;left:1034px;top:318.8px;font-size:12px;line-height:14px;white-space:nowrap">合格框</div>
<div style="position:absolute;left:1034px;top:338.0px;font-size:12px;line-height:14px;white-space:nowrap">f0（Hz）</div>
<div style="position:absolute;left:1129px;top:338.0px;font-size:12px;line-height:14px;white-space:nowrap">668.8</div>
<div style="position:absolute;left:1205px;top:338.0px;font-size:12px;line-height:14px;white-space:nowrap">630.0</div>
<div style="position:absolute;left:1034px;top:357.5px;font-size:12px;line-height:14px;white-space:nowrap">阻抗（Ω）</div>
<div style="position:absolute;left:1129px;top:357.5px;font-size:12px;line-height:14px;white-space:nowrap">77.4</div>
<div style="position:absolute;left:1205px;top:357.5px;font-size:12px;line-height:14px;white-space:nowrap">72.0</div>
<div style="position:absolute;left:1034px;top:377.5px;font-size:12px;line-height:14px;white-space:nowrap">谐波失真（%）</div>
<div style="position:absolute;left:1129px;top:377.5px;font-size:12px;line-height:14px;white-space:nowrap">0.4<span style="font-size:14.5px;line-height:10px">√</span></div>
<div style="position:absolute;left:1205px;top:377.5px;font-size:12px;line-height:14px;white-space:nowrap">0.7<span style="font-size:14.5px;line-height:10px">√</span></div>
<div style="position:absolute;left:1034px;top:397.0px;font-size:12px;line-height:14px;white-space:nowrap">Rub&amp;Buzz（%）</div>
<div style="position:absolute;left:1129px;top:397.0px;font-size:12px;line-height:14px;white-space:nowrap">0.2</div>
<div style="position:absolute;left:1205px;top:397.0px;font-size:12px;line-height:14px;white-space:nowrap">0.2</div>
<div style="position:absolute;left:1034px;top:416.2px;font-size:12px;line-height:14px;white-space:nowrap">测试项目</div>
<div style="position:absolute;left:1129px;top:416.2px;font-size:12px;line-height:14px;white-space:nowrap">麦克风</div>
<div style="position:absolute;left:1034px;top:436.2px;font-size:12px;line-height:14px;white-space:nowrap">100Hz</div>
<div style="position:absolute;left:1129px;top:436.2px;font-size:12px;line-height:14px;white-space:nowrap">-33.6</div>
<div style="position:absolute;left:1034px;top:456.8px;font-size:12px;line-height:14px;white-space:nowrap">1000Hz</div>
<div style="position:absolute;left:1129px;top:456.8px;font-size:12px;line-height:14px;white-space:nowrap">-35.5</div>
<div style="position:absolute;left:1034px;top:477.2px;font-size:12px;line-height:14px;white-space:nowrap">2000Hz</div>
<div style="position:absolute;left:1129px;top:477.2px;font-size:12px;line-height:14px;white-space:nowrap">-36.4</div>
<div style="position:absolute;left:1034px;top:497.5px;font-size:12px;line-height:14px;white-space:nowrap">5000Hz</div>
<div style="position:absolute;left:1129px;top:497.5px;font-size:12px;line-height:14px;white-space:nowrap">-39.9</div>
<div style="position:absolute;left:1034px;top:517.2px;font-size:12px;line-height:14px;white-space:nowrap">平均灵敏度</div>
<div style="position:absolute;left:1129px;top:517.2px;font-size:12px;line-height:14px;white-space:nowrap">-36.3<span style="font-size:14.5px;line-height:10px">√</span></div>
<div style="position:absolute;left:1034px;top:536.8px;font-size:12px;line-height:14px;white-space:nowrap">合格框</div>
<div style="position:absolute;left:1129px;top:536.8px;font-size:12px;line-height:14px;white-space:nowrap"><span style="font-size:14.5px;line-height:10px">√</span></div>
<div style="position:absolute;left:1034px;top:556.5px;font-size:12px;line-height:14px;white-space:nowrap">谐波失真（%）</div>
<div style="position:absolute;left:1129px;top:556.5px;font-size:12px;line-height:14px;white-space:nowrap">4.3</div>
<div style="position:absolute;left:1034px;top:577.2px;font-size:12px;line-height:14px;white-space:nowrap">电流（uA）</div>
<div style="position:absolute;left:1129px;top:577.2px;font-size:12px;line-height:14px;white-space:nowrap">167.1<span style="font-size:14.5px;line-height:10px">√</span></div>
<div style="position:absolute;left:0px;top:26px;width:4px;height:742px;background:linear-gradient(#6a8cb8 0,#5a84b8 120px,#2c74c0 300px,#1e6ab8 100%)"></div>
<div style="position:absolute;left:4px;top:26px;width:1px;height:742px;background:#1a3050"></div>
<div style="position:absolute;left:1361px;top:0px;width:5px;height:768px;background:linear-gradient(#7a98b8 0,#6a8aae 90px,#3c68a0 200px,#1f4f8c 320px,#1f4f8c 100%);box-shadow:inset 1px 0 0 #2a3a4a,inset 2px 0 0 rgba(255,255,255,.35)"></div>
<div style="position:absolute;left:0px;top:763px;width:1366px;height:5px;background:linear-gradient(#1c3c60 0,#1c3c60 1px,#6aa0d0 1px,#3878b8 5px)"></div>
</body></html>
